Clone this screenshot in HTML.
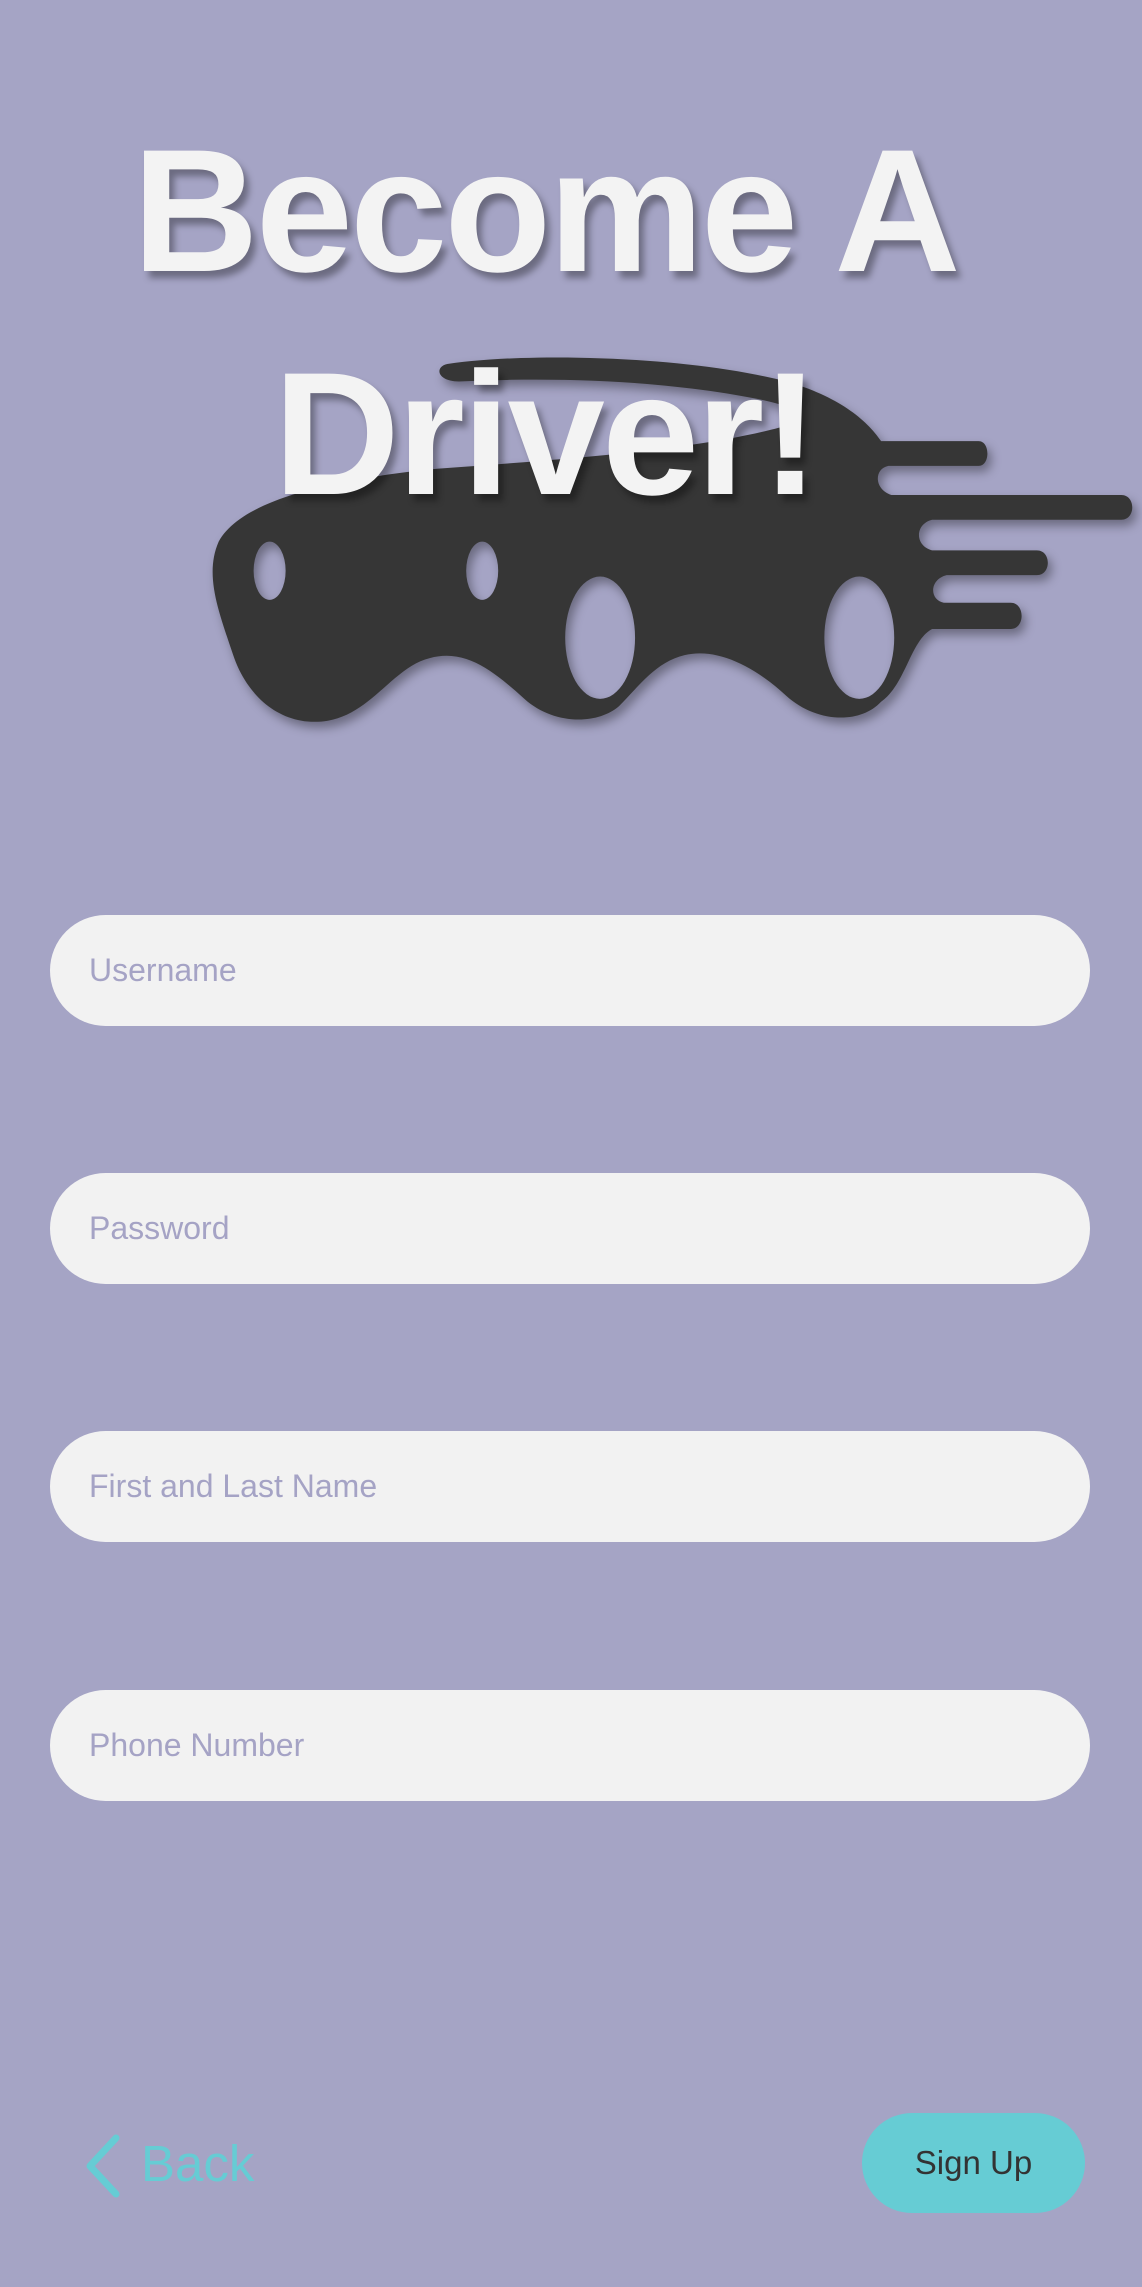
<!DOCTYPE html>
<html><head><meta charset="utf-8"><style>
html,body{margin:0;padding:0}
body{width:1142px;height:2287px;background:#a5a4c5;position:relative;overflow:hidden;font-family:"Liberation Sans",sans-serif}
.t{position:absolute;left:0;width:1090px;text-align:center;color:#f3f3f3;font-size:175px;font-weight:bold;letter-spacing:-3px;line-height:1;text-shadow:5px 7px 7px rgba(0,0,0,.35);white-space:nowrap}
.f{position:absolute;left:50px;width:1040px;height:111px;border-radius:56px;background:#f2f2f2;box-sizing:border-box;padding-left:39px;line-height:111px;font-size:32px;color:#a5a3c5}
</style></head><body>
<svg style="position:absolute;left:0;top:0;filter:drop-shadow(4px 6px 5px rgba(0,0,0,.35))" width="1142" height="760" viewBox="0 0 784 522">
<g fill="#363636" fill-rule="evenodd">
<path d="M307,250 C360,242 470,244 540,262 C575,272 595,288 605,303 L672,303 C680,303 680,320 672,320 L610,320 C600,322 600,336 612,340 L770,340 C780,340 780,357 770,357 L640,357 C628,360 628,375 640,378 L712,378 C722,378 722,395 712,395 L650,395 C638,398 638,412 648,414 L694,414 C704,414 704,432 694,432 L640,432 C625,440 622,470 605,482 C590,498 560,496 540,478 C515,455 490,445 470,450 C450,455 440,470 425,485 C410,498 380,498 360,480 C340,462 320,445 295,452 C270,458 255,490 225,495 C195,500 170,480 160,450 C150,420 140,395 150,372 C165,345 220,330 300,322 C380,316 470,310 530,295 C560,288 550,280 520,274 C470,264 400,258 315,262 C300,262 298,252 307,250 Z
M174,392 A11,20 0 1,0 196,392 A11,20 0 1,0 174,392 Z
M320,392 A11,20 0 1,0 342,392 A11,20 0 1,0 320,392 Z
M388,438 A24,42 0 1,0 436,438 A24,42 0 1,0 388,438 Z
M566,438 A24,42 0 1,0 614,438 A24,42 0 1,0 566,438 Z"/>
</g></svg>
<div class="t" style="top:124px">Become A</div>
<div class="t" style="top:347px">Driver!</div>
<div class="f" style="top:915px">Username</div>
<div class="f" style="top:1173px">Password</div>
<div class="f" style="top:1431px">First and Last Name</div>
<div class="f" style="top:1690px">Phone Number</div>
<svg style="position:absolute;left:82px;top:2132px" width="44" height="68" viewBox="0 0 44 68"><path d="M34,6 L8,34 L34,62" fill="none" stroke="#66ccd4" stroke-width="7" stroke-linecap="round" stroke-linejoin="round"/></svg>
<div style="position:absolute;left:141px;top:2136px;font-size:51px;line-height:56px;color:#66ccd4">Back</div>
<div style="position:absolute;left:862px;top:2113px;width:223px;height:100px;border-radius:50px;background:#66ccd4;color:#333;font-size:33px;line-height:100px;text-align:center">Sign Up</div>
</body></html>
